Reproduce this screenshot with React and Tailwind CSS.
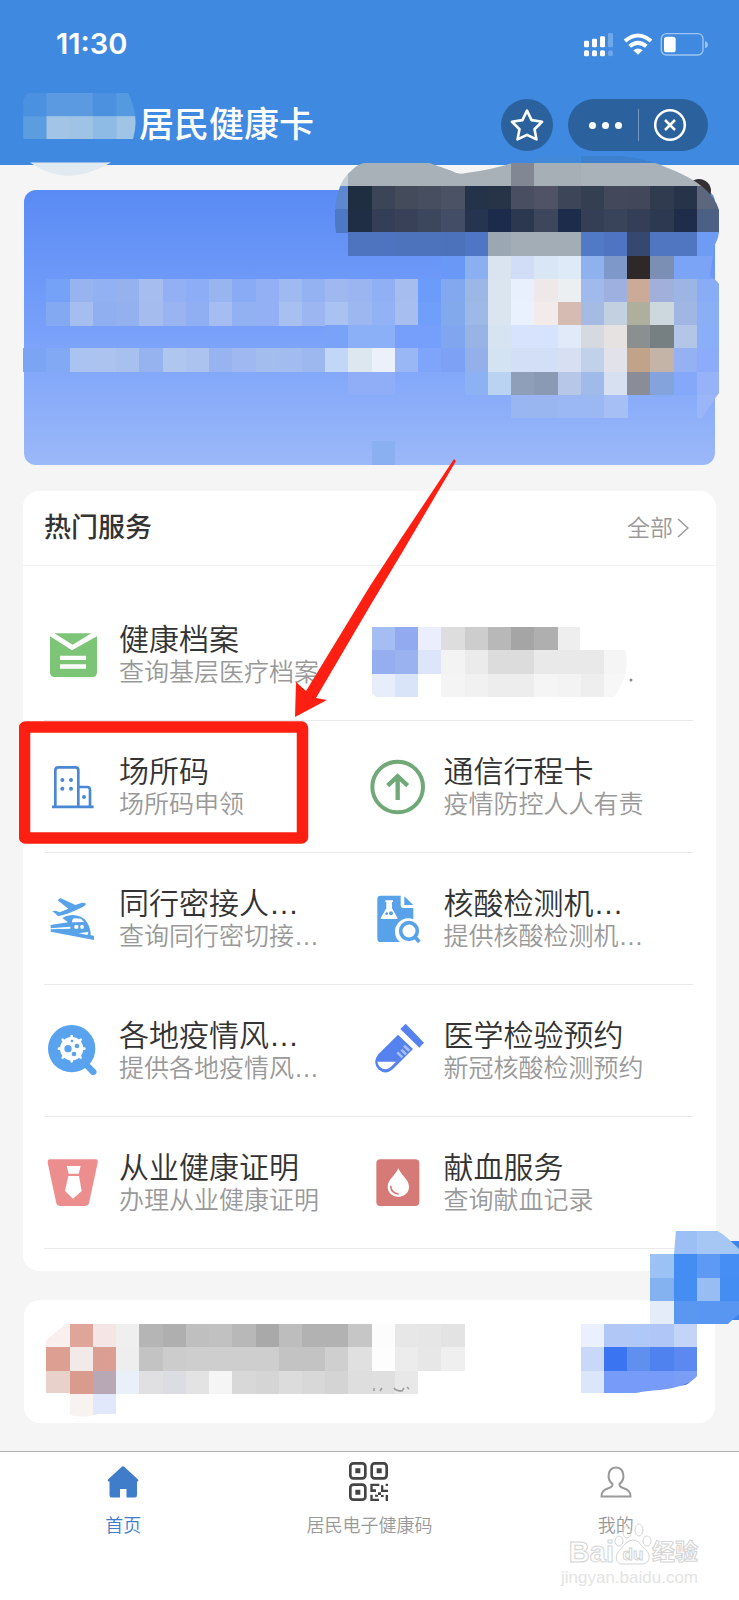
import React from "react";

const U = 23.23;

// Draws blocks of a coarse grid: each row is [row index, first column, colours]; "-" leaves a hole.
function Blocks({ rows }) {
  return rows.flatMap(([r, c, colours]) =>
    colours.split(" ").map((fill, i) =>
      fill === "-" ? null : (
        <rect key={`${r}-${c + i}`} x={(c + i) * U} y={r * U} width={U + 0.3} height={U + 0.3} fill={"#" + fill} />
      )
    )
  );
}

const bannerRows = [
  [6, 23, "4389da 4389da 3c80ce 3c80ce 3c80ce 3c82d2"],
  [7, 14, "c5d0d9 a8b1b8 a8b1b8 a8b1b8 a8b1b8 a8b1b8 a8b1b8 a8b1b8 828893 a6afb6 a6afb6 a9b1b9 a9b1b9 a9b1b9 a9b1b9 a9b1b9 a9b1b9"],
  [8, 14, "5d88cf 202e42 3c4557 444b5b 474e5f 4b5264 25334a 273447 494e60 4f5365 3d4558 353f52 43485a 424859 303b50 273348 5c667c"],
  [9, 14, "4d78c4 1f2d45 343e56 394158 3c465c 434e66 263450 1c2b4b 2c3850 3d465a 1e2c4b 343f55 394359 343e56 2d3951 1f2d4a 4c5f84"],
  [10, 15, "4e74c0 4e74c0 4d73bd 4d73bd 4c72bc 4e76c4 9ba7b2 a2adb5 a2adb5 a2adb5 5279c6 4f74c2 36486f 5076c1 5076c1 6f9cf3"],
  [11, 19, "6a98f6 8bb0f1 dae4f0 d1ddf6 d9e6f5 dfeaf8 8fb1ee 7e98c9 2f2828 7b8eb3 7ba3f6 7ba3f6"],
  [12, 2, "75a1f6 97b3f0 92b1f2 95b2ef a5bdef 92b0f3 8dadf6 99b5ef 89aaf5 92b0f3 a0b9f0 94b1f1 9fb8ef 9ab5f0 90aff5 a5bdef 6c9cf9 82a8ef 9bb7e6 dae5f0 e8f0fe efe8e8 eceff2 a1baec 9db0df cbaa97 a1b0da 9cb5e4 88adf6"],
  [13, 2, "82a9f2 a5beef 90aff0 93b1ee a5bdee 99b4f0 90aff2 a5bdf0 92b1f2 92b0f3 a8c0f0 9bb6f0 aac2f1 9db7f1 93b1f5 a7bff0 6f9ffa 82a9ec 9db9e8 dae5f0 eaf1fe f2ebea d5bcb2 a5bbe4 c2d0e0 aeb09d ccd7de a0b7e4 8aaff5"],
  [14, 14, "7aa2f6 8cb0f7 8cb0f7 759ffa 759ffa 7fa6ef 98b4e4 d6e3f1 d7e3fd d7e3fd e1eaf9 d6dae0 e6e2e2 8a908f 767f81 b4c6e8 8aaef8"],
  [15, 1, "7ba4f3 82a9f4 abc3f0 abc3ee a7c0ee 96b3ef afc7ef abc3ee 98b4f0 9fb8f2 a3bdef a3bcef 9db7ef c2d6f8 dce7f0 ecf1f9 98b7f4 7fa5fa 7da2f5 93b0ea d3e3f2 d3dff7 d3dff7 d7e0f2 c2d1ea e2e3ea c1a389 c4b4a7 95b1f4 8cabfb"],
  [16, 15, "90adf8 90adf8 - - - 8db2f3 bbd3f2 909fb9 8b9ab4 b6c7e7 a0bae9 d6e0f1 8a8d97 84a2dc 84a8fa 97b3f8"],
  [17, 22, "9ab6f0 9ab6f0 9bb7f4 9bb7f4 a6c0f6 - - - 9ab6f8"],
  [19, 16, "8ab0f1"],
];

function BannerArt() {
  return (
    <svg viewBox="23 150 697 315" className="absolute -left-px -top-10 h-[315px] w-[697px] max-w-none" aria-hidden="true">
      <clipPath id="bannerClip">
        <path d="M336 234 Q333 210 338 192 Q342 178 352 170 Q358 164 366 162.6 H428 L452 171 Q458 175 466 173 Q495 169 512 163 Q535 157 555 156 H620 Q645 158 668 168 Q712 185 719 210 V232 Q718 240 714 246 L710 277 Q716 279 719 284 V393 L714 400 L698 424 V465 H23 V234Z" />
      </clipPath>
      <circle cx="699" cy="191" r="12" fill="#332f33" />
      <g clipPath="url(#bannerClip)" shapeRendering="crispEdges">
        <Blocks rows={bannerRows} />
      </g>
    </svg>
  );
}

function NameArt() {
  return (
    <svg viewBox="23 93 116 64" className="h-16 w-[116px] shrink-0 overflow-visible" aria-hidden="true">
      <clipPath id="nameClip">
        <path d="M30 93 H128 Q140 116 133 139 H23 V102 Q24 95 30 93Z" />
      </clipPath>
      <g clipPath="url(#nameClip)">
        <Blocks rows={[[4, 1, "4c91df 5b9ae0 5b9ae1 4c91df 549ae0"], [5, 1, "5c9de0 a2c5e6 9ec3e5 8ebae6 a0c4e6"]]} />
      </g>
      <path d="M30 162.5 H111 Q88 176 66 176 Q46 174 30 162.5Z" fill="#e1e9f1" />
    </svg>
  );
}

function HiddenService() {
  return (
    <svg viewBox="369 612 264 85" className="h-[85px] w-[264px]" aria-hidden="true">
      <clipPath id="hiddenClip">
        <path d="M371 612 H580 V650 H625 Q629 665 624 678 Q620 690 614 697 H376 L371 692Z" />
      </clipPath>
      <g clipPath="url(#hiddenClip)" shapeRendering="crispEdges">
        <Blocks
          rows={[
            [27, 16, "a4bdf3 92abf0 ebeffd dddddd cdcdcd b8b8b8 a5a5a5 afafaf eeeeee"],
            [28, 16, "95aef0 9ab2ef dce5fa f3f3f3 ebebeb dcdcdc dcdcdc e9e9e9 e9e9e9 e9e9e9 f5f5f5"],
            [29, 16, "e7edfb dae4f9 - f4f4f4 f1f1f1 ededed ededed f5f5f5 f3f3f3 eeeeee f7f7f7"],
          ]}
        />
      </g>
      <circle cx="631" cy="680" r="1.5" fill="#8a8a8a" />
    </svg>
  );
}

function RecordArt() {
  return (
    <svg viewBox="46 1323 440 94" className="h-[94px] w-[440px]" aria-hidden="true">
      <clipPath id="recordClip">
        <path d="M66 1324 H486 V1394 H117 V1414 H98 Q84 1419 70 1415 V1393 H46 V1340Z" />
      </clipPath>
      <g clipPath="url(#recordClip)" shapeRendering="crispEdges">
        <Blocks
          rows={[
            [57, 2, "f8efee dfa598 f5e6e6 efefef b5b5b5 afafaf bfbfbf c1c1c1 b8b8b8 a9a9a9 bdbdbd b2b2b2 b2b2b2 c6c6c6 fcfcfc e7e7e7 e6e6e6 e3e3e3"],
            [58, 2, "dd9f92 f2eae9 db9e92 eeeeef c3c3c3 cccccc cecece cecece cecece cecece c3c3c3 c3c3c3 cfcfcf e0e0e0 fdfdfd ececec e7e7e7 efefef"],
            [59, 2, "e9d1cb d89b8e b8a8b5 e9f0fa e0e0e2 dcdde3 e3e3e3 f5f5f5 d8d8d8 d5d5d5 dcdcdc d8d8d8 d4d4d4 dedede dfdfdf e8e8e8"],
            [60, 3, "f8f3f0 e1e8fb"],
          ]}
        />
      </g>
      <path d="M374 1391v-3M380 1391l2-3M394 1388q2 3 8 3l2-3M407 1387l2 2" fill="none" stroke="#9a9a9a" strokeWidth="1.5" />
    </svg>
  );
}

function RecordAction() {
  return (
    <svg viewBox="580 1323 117 71" className="h-[71px] w-[117px]" aria-hidden="true">
      <clipPath id="actionClip">
        <path d="M580 1323 H697 V1376 Q690 1386 660 1390 Q645 1391 636 1393 H580Z" />
      </clipPath>
      <path d="M676 1385 Q690 1388 693 1376Z" fill="#3d66d8" />
      <g clipPath="url(#actionClip)" shapeRendering="crispEdges">
        <Blocks
          rows={[
            [57, 25, "eaf0fd b1c8f7 b0c8f8 afc6f7 c4d3f8"],
            [58, 25, "c7d8f9 3a74f1 5f90f0 4f82ef 5b88f1"],
            [59, 25, "dbe6fb 769bf8 769bf8 769bf8 7a9ef5"],
          ]}
        />
      </g>
    </svg>
  );
}

function FloatingBadge() {
  return (
    <svg viewBox="650 1230 89 94" className="absolute -right-6 -top-[70px] z-10 h-[94px] w-[89px]" aria-hidden="true">
      <path d="M730 1241H739V1320H730Z" fill="#3f84ea" />
      <clipPath id="badgeClip">
        <path d="M676 1230 H715 Q722 1232 739 1249 V1314 Q732 1320 728 1324 H650 V1254 H674Z" />
      </clipPath>
      <g clipPath="url(#badgeClip)" shapeRendering="crispEdges">
        <Blocks
          rows={[
            [53, 29, "9cc0f5 a6c6f4 a6c6f4"],
            [54, 28, "9cc1f4 448df3 5e9af3 468ef3"],
            [55, 28, "84b1f0 448df3 97bdf3 448df3"],
            [56, 28, "e4ebf9 5a97f0 5896f1 5896f1"],
          ]}
        />
      </g>
    </svg>
  );
}

function StatusIcons() {
  return (
    <svg viewBox="645 95 378 75" className="h-[25px] w-[126px]" fill="#fff" aria-hidden="true">
      <rect x="648" y="121" width="15" height="20" rx="4" />
      <rect x="672" y="115" width="15" height="26" rx="4" />
      <rect x="696" y="108" width="15" height="33" rx="4" />
      <rect x="720" y="98" width="15" height="43" rx="4" opacity=".25" />
      <rect x="648" y="150" width="15" height="18" rx="5" />
      <rect x="672" y="150" width="15" height="18" rx="5" />
      <rect x="696" y="150" width="15" height="18" rx="5" />
      <rect x="720" y="150" width="15" height="18" rx="7" opacity=".25" />
      <g fill="none" stroke="#fff" strokeWidth="12">
        <path d="M771 122 Q810 89 849 122" />
        <path d="M785 138 Q810 117 835 138" />
      </g>
      <path d="M796 150 Q810 139 824 150 L810 163Z" />
      <rect x="880" y="100" width="125" height="64" rx="15" fill="none" stroke="#fff" strokeOpacity=".5" strokeWidth="4" />
      <rect x="888" y="109" width="35" height="47" rx="8" />
      <path d="M1011 122 Q1020 126 1020 133 Q1020 140 1011 144Z" opacity=".5" />
    </svg>
  );
}

const icons = {
  mail: (
    <svg viewBox="132 438 168 168" className="size-14">
      <path d="M150 466 L216 508 L291 466 V574 Q291 588 277 588 H164 Q150 588 150 574Z" fill="#7cc576" />
      <path d="M163 457 H274 L218 491Z" fill="#7cc576" />
      <path d="M180 530.500H258M180 556.500H258" stroke="#fff" strokeWidth="13" />
    </svg>
  ),
  building: (
    <svg viewBox="132 834 168 168" className="size-14" fill="none" stroke="#4a88d4" strokeWidth="8">
      <path d="M166 976 V868 Q166 859 175 859 H226 Q235 859 235 868 V976 M235 918 H262 Q270 918 270 927 V976" />
      <path d="M156 977.500 H281" />
      <g fill="#4a88d4" stroke="none">
        <circle cx="187" cy="897" r="6" /><circle cx="213" cy="897" r="6" />
        <circle cx="187" cy="923" r="6" /><circle cx="213" cy="923" r="6" />
        <circle cx="252" cy="948" r="6" />
      </g>
    </svg>
  ),
  arrow: (
    <svg viewBox="57 834 168 168" className="size-14" fill="none" stroke="#70a877" strokeWidth="12">
      <circle cx="143" cy="918" r="76" />
      <path d="M143 957 V886 M113 914 L143 886 L173 914" strokeWidth="13" />
    </svg>
  ),
  travel: (
    <svg viewBox="132 90 168 168" className="size-14" fill="#58a2ea">
      <path d="M157 150 L167 149 L179 154 L205 143 L173 118 L181 111 L226 132 L246 125 Q262 124 256 133 Q245 142 202 158 L175 166Z" />
      <path d="M152 192 L204 184 L187 171 Q196 164 217 162 Q246 162 260 182 Q272 200 272 222 L282 225 V237 L152 212Z" />
      <path d="M216 184 Q216 173 224 172 L243 173 L252 183Z" fill="#fff" />
      <path d="M150 202 L211 197 V203 L150 205Z" fill="#fff" />
      <rect x="223" y="192" width="12" height="11" rx="3" fill="#fff" />
      <rect x="241" y="192" width="10" height="11" rx="3" fill="#fff" />
      <path d="M236 217 L262 213 Q268 214 262 222Z" fill="#fff" />
    </svg>
  ),
  report: (
    <svg viewBox="27 90 168 168" className="size-14" fill="#58a2ea">
      <path d="M62 104 H122 V132 Q122 141 131 141 H160 V243 H62 Q52 243 52 233 V114 Q52 104 62 104Z" />
      <path d="M133 106 L160 132 H133Z" />
      <path d="M76 118 H99 V123 H96 V142 L113 172 Q113 174 110 174 H64 Q61 174 62 171 L79 142 V123 H76Z" fill="#fff" />
      <circle cx="80" cy="158" r="4" /><circle cx="93" cy="157" r="6" />
      <circle cx="145" cy="212" r="40" fill="#fff" />
      <circle cx="147" cy="210" r="25" fill="#fff" stroke="#58a2ea" strokeWidth="11" />
      <path d="M163 226 L178 243" stroke="#58a2ea" strokeWidth="11" />
    </svg>
  ),
  virus: (
    <svg viewBox="132 489 168 168" className="size-14">
      <circle cx="215" cy="566" r="71" fill="#58a2ee" />
      <path d="M255 610 L280 636" stroke="#58a2ee" strokeWidth="19" strokeLinecap="round" />
      <circle cx="215" cy="566" r="35" fill="#fff" />
      <g stroke="#fff" strokeWidth="8" strokeLinecap="round">
        <path d="M215 528V604M177 566H253M188 539L242 593M242 539L188 593" />
      </g>
      <g fill="#58a2ee">
        <circle cx="204" cy="566" r="11" /><circle cx="231" cy="558" r="7" /><circle cx="222" cy="582" r="7" /><circle cx="216" cy="543" r="4" />
      </g>
    </svg>
  ),
  tube: (
    <svg viewBox="27 489 168 168" className="size-14" fill="#5682f0">
      <path d="M137 491 L192 548 L178 563 L121 507Z" />
      <path d="M114 524 L159 567 L99 627 Q76 647 55 628 Q36 606 55 583Z" />
      <path d="M52 605 H108 L93 620 Q76 635 60 621 Q54 614 52 605Z" fill="#fff" />
      <path d="M112 577 L127 592 M124 569 L138 583 M132 557 L148 572" stroke="#a9c0f8" strokeWidth="8" />
    </svg>
  ),
  tie: (
    <svg viewBox="132 885 168 168" className="size-14">
      <path d="M150 898 H287 Q295 899 293 908 L267 1030 Q265 1038 257 1038 H179 Q171 1038 169 1030 L143 908 Q142 899 150 898Z" fill="#ec8e8e" />
      <path d="M200 918 H242 L236 941 H206Z M205 948 H237 L245 993 L219 1016 L195 993Z" fill="#fff" />
    </svg>
  ),
  blood: (
    <svg viewBox="27 885 168 168" className="size-14">
      <rect x="49" y="898" width="129" height="140" rx="12" fill="#d67a78" />
      <path d="M115 925 C123 945 147 960 147 980 A32 31 0 0 1 83 980 C83 960 107 945 115 925Z" fill="#fff" />
      <path d="M92 979 Q94 998 114 1002" fill="none" stroke="#d67a78" strokeWidth="5" strokeLinecap="round" />
    </svg>
  ),
};

const services = [
  [{ icon: "mail", title: "健康档案", note: "查询基层医疗档案" }, null],
  [{ icon: "building", title: "场所码", note: "场所码申领" }, { icon: "arrow", title: "通信行程卡", note: "疫情防控人人有责" }],
  [{ icon: "travel", title: "同行密接人…", note: "查询同行密切接…" }, { icon: "report", title: "核酸检测机…", note: "提供核酸检测机…" }],
  [{ icon: "virus", title: "各地疫情风…", note: "提供各地疫情风…" }, { icon: "tube", title: "医学检验预约", note: "新冠核酸检测预约" }],
  [{ icon: "tie", title: "从业健康证明", note: "办理从业健康证明" }, { icon: "blood", title: "献血服务", note: "查询献血记录" }],
];

function Service({ item }) {
  if (!item) return <HiddenService />;
  return (
    <a href="#" className="flex items-center gap-[19px]">
      {icons[item.icon]}
      <span className="flex flex-col whitespace-nowrap font-[350]">
        <span className="text-[30px] leading-[34px] text-[#333]">{item.title}</span>
        <span className="text-[25px] leading-[30px] text-[#999]">{item.note}</span>
      </span>
    </a>
  );
}

function Callout() {
  return (
    <svg viewBox="19 459 440 386" className="pointer-events-none absolute -left-1 -top-8 z-30 h-[386px] w-[440px] max-w-none" aria-hidden="true">
      <rect x="24.500" y="727" width="278" height="111" rx="1" fill="none" stroke="#fd1f12" strokeWidth="11.500" strokeLinejoin="round" />
      <path d="M454 459 L456 461 L403 551 L370 606 L316 698 L327 700 L295 717 L296 682 L306 691 L370 586 L400 540Z" fill="#fd1f12" />
    </svg>
  );
}

function QrIcon() {
  return (
    <svg viewBox="60 38 120 120" className="size-10" fill="#444" aria-hidden="true">
      <g fill="none" stroke="#444" strokeWidth="8">
        <rect x="64" y="42" width="45" height="45" rx="9" />
        <rect x="128" y="42" width="45" height="45" rx="9" />
        <rect x="64" y="106" width="45" height="45" rx="9" />
      </g>
      <path d="M79 57h15v15h-15z M143 57h15v15h-15z M79 121h15v15h-15z" />
      <path d="M124 103h27v7h-20v10h10v8h-17z M156 108h7v13h14v7h-21z M170 103h7v7h-7z M147 129h9v8h-9z M124 136h7v12h19v7h-26z M138 136h9v6h-9z M156 137h8v6h-8z M170 137h7v18h-7z" />
    </svg>
  );
}

function Watermark() {
  return (
    <div className="pointer-events-none absolute bottom-2.5 right-[41px] flex flex-col items-end text-transparent">
      <div className="flex items-end [-webkit-text-stroke:1px_#d4d4d4]">
        <span className="text-[29px] font-bold leading-7">Bai</span>
        <svg viewBox="0 0 38 40" className="h-10 w-[38px] overflow-visible" fill="none" stroke="#d4d4d4" strokeWidth="1">
          <ellipse cx="5" cy="15" rx="4" ry="5" />
          <ellipse cx="13" cy="6" rx="4" ry="6" />
          <ellipse cx="25" cy="4" rx="4" ry="6" />
          <ellipse cx="33" cy="15" rx="4" ry="5" />
          <path d="M19 14 C25 14 27 20 32 24 C38 30 35 38 28 38 H9 C2 38 0 31 5 25 C10 20 13 14 19 14Z" />
          <text x="19" y="34" textAnchor="middle" fontSize="17" fontWeight="bold">du</text>
        </svg>
        <span className="text-[23px] font-bold leading-7">经验</span>
      </div>
      <span className="text-[17px] leading-6 text-[#e4e4e4]">jingyan.baidu.com</span>
    </div>
  );
}

export default function App() {
  return (
    <div lang="zh-CN" className="flex min-h-screen flex-col bg-[#f5f5f5] font-['Liberation_Sans','Noto_Sans_CJK_SC',sans-serif]">
      <header className="relative z-10 bg-[#3f8ae0] pb-3.5 text-white">
        <div className="flex h-[88px] items-center justify-between pl-14 pr-[30px] font-['Inter','Liberation_Sans',sans-serif]">
          <time className="text-[29px] font-semibold leading-8">11:30</time>
          <StatusIcons />
        </div>
        <div className="mt-[11px] flex h-[52px] items-center justify-between pl-[23px] pr-[31px]">
          <h1 className="flex items-center text-[35px] font-medium leading-[52px]">
            <NameArt />
            居民健康卡
          </h1>
          <div className="flex gap-[15px]">
            <button type="button" aria-label="收藏" className="flex size-[52px] items-center justify-center rounded-full bg-[#2b629d]">
              <svg viewBox="421 324 104 104" className="size-[34px]" fill="none" stroke="#fff" strokeWidth="8" strokeLinejoin="round">
                <path d="M473 332 L487 361 L519 366 L496 389 L502 420 L473 406 L444 420 L450 389 L427 366 L459 361Z" />
              </svg>
            </button>
            <div className="flex h-[52px] w-[140px] items-center rounded-full bg-[#2b629d]">
              <button type="button" aria-label="更多" className="flex h-full flex-1 items-center justify-center gap-1.5 pl-1.5">
                <span className="size-[7px] rounded-full bg-white" />
                <span className="size-[7px] rounded-full bg-white" />
                <span className="size-[7px] rounded-full bg-white" />
              </button>
              <span className="h-8 w-px bg-white/35" />
              <button type="button" aria-label="关闭" className="flex h-full flex-1 items-center justify-center pr-1.5">
                <svg viewBox="0 0 34 34" className="size-[34px]" fill="none" stroke="#fff" strokeWidth="2.500">
                  <circle cx="17" cy="17" r="14.800" />
                  <path d="M12 12 L22 22 M22 12 L12 22" />
                </svg>
              </button>
            </div>
          </div>
        </div>
      </header>

      <main className="flex flex-col px-[23px] pb-7 pt-[25px]">
        <section aria-label="横幅" className="relative z-20 mx-px h-[275px] rounded-xl bg-linear-to-b from-[#598bf4] via-[#78a0fa] to-[#9bb8f8]">
          <BannerArt />
        </section>

        <section className="relative mt-[26px] rounded-2xl bg-white pb-[22px]">
          <div className="flex h-[75px] items-center justify-between border-b border-[#f2f2f2] pl-[21px] pr-[27px]">
            <h2 className="text-[27px] font-medium leading-8 text-[#333]">热门服务</h2>
            <a href="#" className="flex items-center gap-1 text-[23px] font-[350] leading-8 text-[#999]">
              全部
              <svg viewBox="0 0 12 20" className="h-5 w-3" fill="none" stroke="#999" strokeWidth="1.500">
                <path d="M1 1 L11 10 L1 19" />
              </svg>
            </a>
          </div>
          <ul className="ml-[21px] mr-[23px] pt-[23px]">
            {services.map(([left, right], i) => (
              <li key={i} className="grid h-[132px] grid-cols-2 items-center border-b border-[#e9e9e9]">
                <Service item={left} />
                <Service item={right} />
              </li>
            ))}
          </ul>
          <Callout />
        </section>

        <section aria-label="记录" className="relative mx-px mt-[29px] flex h-[123px] items-start justify-between rounded-2xl bg-white pl-[22px] pr-[18px] pt-[23px]">
          <RecordArt />
          <RecordAction />
          <FloatingBadge />
        </section>
      </main>

      <nav className="relative grid flex-1 grid-cols-3 items-start border-t border-[#b2b2b2] bg-white pb-[60px] pt-2.5 text-lg font-[350] leading-6 text-[#999]">
        <a href="#" className="flex flex-col items-center gap-3 text-[#3f7cca]">
          <svg viewBox="0 0 40 40" className="size-10" fill="#3f7cca">
            <path d="M18.500 5 Q20 3.500 21.500 5 L35 17.500 Q36 19.500 34 19.500 V33 Q34 35.500 32 35.500 H23.500 V27 H17 V35.500 H8.500 Q6.500 35.500 6.500 33 V19.500 Q4 19.500 5 17.500Z" />
          </svg>
          首页
        </a>
        <a href="#" className="flex flex-col items-center gap-3">
          <QrIcon />
          居民电子健康码
        </a>
        <a href="#" className="flex flex-col items-center gap-3">
          <svg viewBox="0 0 40 40" className="size-10" fill="none" stroke="#999" strokeWidth="2">
            <path d="M16.500 22 C10 17 12 5.500 20 5.500 C28 5.500 30 17 23.500 22 Q23 24.500 27 26 Q35 28 34.500 34.500 H5.500 Q5 28 13 26 Q17 24.500 16.500 22Z" />
          </svg>
          我的
        </a>
        <Watermark />
      </nav>
    </div>
  );
}
